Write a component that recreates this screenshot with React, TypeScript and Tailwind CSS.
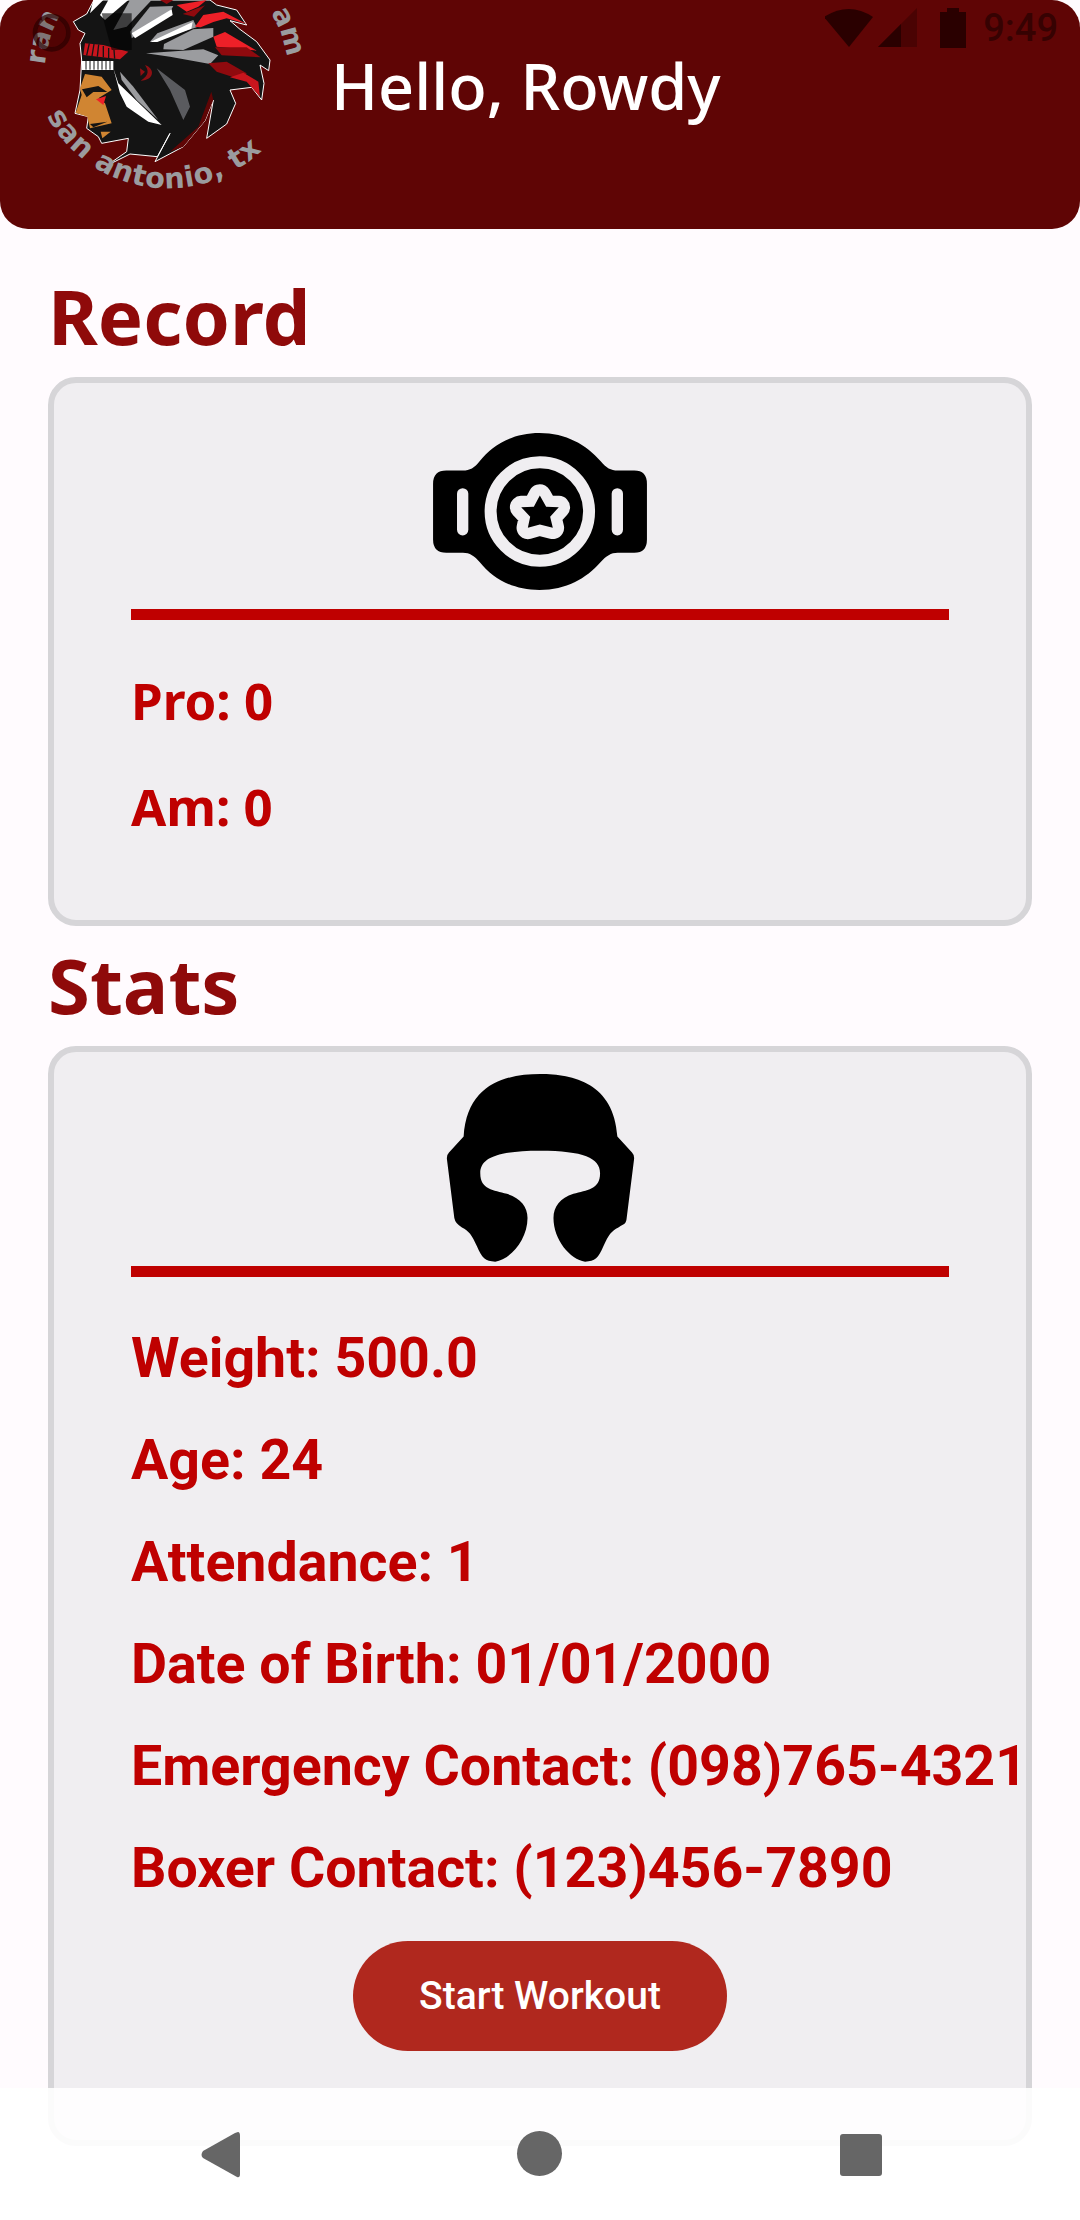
import React from "react";

function Logo() {
  return (
    <svg viewBox="0 0 930 687" className="w-[310px] h-[229px] shrink-0">
      <defs>
        <path id="logoTop" d="M135 195 A365 365 0 0 1 860 172" fill="none" />
        <path id="logoBottom" d="M140 347 A410 410 0 0 0 885 302" fill="none" />
      </defs>
      <text fontFamily="'DejaVu Sans', sans-serif" fontWeight="700" fontSize="84" fill="#9b9c9f">
        <textPath href="#logoTop" startOffset="0">ran</textPath>
      </text>
      <text fontFamily="'DejaVu Sans', sans-serif" fontWeight="700" fontSize="84" fill="#9b9c9f" textAnchor="end">
        <textPath href="#logoTop" startOffset="100%">am</textPath>
      </text>
      <g transform="translate(210 0)">
        <path
          d="M10 65 L50 42 L72 0 L420 0 L440 15 L500 30 L530 75 L480 62 L510 88 L560 125 L600 180 L596 212 L570 195 L582 250 L575 300 L545 262 L480 270 L497 310 L470 372 L410 415 L430 300 L405 362 L340 440 L255 485 L300 400 L262 470 L180 462 L110 497 L170 455 L175 415 L95 430 L85 410 L50 385 L55 350 L15 340 L30 270 L35 180 L30 130 L45 100 L25 90 Z"
          fill="#141414"
          stroke="#ffffff"
          strokeWidth="3"
          strokeLinejoin="round"
        />
        <path d="M424 275 L430 300 L405 362 L340 440 L300 455 L385 380 Z" fill="#5f0505" />
        <path d="M70 0 L100 0 L60 40 Z" fill="#ffffff" />
        <path d="M115 0 L175 0 L105 60 L90 45 Z" fill="#ffffff" />
        <path d="M180 0 L245 0 L170 80 L130 90 Z" fill="#9b9c9f" />
        <path d="M240 20 L310 18 L300 35 L185 115 L180 95 Z" fill="#9b9c9f" />
        <path d="M185 100 L305 28 L308 45 L195 115 Z" fill="#ffffff" />
        <path d="M262 100 L370 60 L380 82 L240 125 Z" fill="#9b9c9f" />
        <path d="M240 126 L368 66 L364 86 L262 126 Z" fill="#ffffff" />
        <path d="M282 132 L370 88 L430 84 L430 110 L340 150 L280 148 Z" fill="#9b9c9f" />
        <path d="M228 160 L400 148 L445 166 L420 192 L300 170 Z" fill="#9b9c9f" />
        <path d="M430 110 L465 96 L560 152 L440 140 Z" fill="#ee2028" />
        <path d="M435 142 L530 142 L572 172 L455 166 Z" fill="#8f0a0e" />
        <path d="M415 190 L470 185 L530 220 L520 232 L500 235 L440 215 Z" fill="#8f0a0e" />
        <path d="M520 218 L565 245 L570 290 L530 245 L480 232 Z" fill="#c8151d" />
        <path d="M375 80 L400 45 L460 35 L530 72 L470 55 L430 66 L392 82 Z" fill="#ee2028" />
        <path d="M320 15 L410 0 L385 20 L350 35 Z" fill="#ee2028" />
        <path d="M338 42 L405 16 L372 50 Z" fill="#8f0a0e" />
        <path d="M270 0 L310 0 L290 12 Z" fill="#8f0a0e" />
        <path d="M45 130 L100 135 L175 155 L150 178 L40 165 Z" fill="#c8151d" />
        <path d="M58 130 L50 166 M72 132 L66 168 M86 134 L82 170 M100 138 L100 172 M116 144 L116 174 M132 150 L134 176" stroke="#141414" strokeWidth="4" />
        <path d="M35 183 H130 V210 H35 Z" fill="#ffffff" />
        <path d="M48 183 V209 M60 183 V209 M72 183 V209 M84 183 V209 M96 183 V209 M108 183 V209 M120 183 V209" stroke="#141414" strokeWidth="3" />
        <path d="M45 222 L95 230 L125 270 L85 295 L105 310 L125 370 L60 385 L52 350 L17 338 L35 285 L30 265 Z" fill="#d08532" />
        <path d="M36 268 L85 258 L112 276 L70 276 L50 292 Z" fill="#141414" />
        <path d="M78 298 L108 288 L100 315 Z" fill="#ee2028" />
        <path d="M60 372 L112 365 L70 382 Z" fill="#141414" />
        <path d="M92 395 L122 395 L97 415 Z" fill="#d08532" />
        <path d="M130 205 L145 250 L275 375 L235 365 L170 320 L150 280 Z" fill="#ffffff" />
        <path d="M150 215 L190 260 L265 360 L200 300 L155 240 Z" fill="#9b9c9f" />
        <path d="M260 205 L345 270 L360 320 L340 360 L300 270 Z" fill="#5a5b5f" />
        <path d="M225 195 C255 205 255 240 212 242 C240 225 235 210 225 195 Z M210 205 L225 215 L212 228 Z" fill="#8f0f13" />
        <path d="M95 40 H185 V150 H125 Z" fill="#000000" fillOpacity="0.6" />
      </g>
      <text fontFamily="'DejaVu Sans', sans-serif" fontWeight="700" fontSize="86" fill="#9b9c9f" letterSpacing="2">
        <textPath href="#logoBottom" startOffset="0">san antonio, tx</textPath>
      </text>
      <circle cx="155" cy="98" r="50" fill="none" stroke="#2a0000" strokeOpacity="0.7" strokeWidth="14" />
      <circle cx="155" cy="98" r="44" fill="#2a0000" fillOpacity="0.25" />
    </svg>
  );
}

function BeltIcon() {
  return (
    <svg viewBox="100 70 643 472" className="w-[214px] h-[157px]">
      <path
        d="M420 70 C340 70 280 105 240 155 C225 175 210 183 190 183 L140 183 Q100 183 100 223 V390 Q100 430 140 430 H190 C210 430 225 440 240 458 C280 508 340 542 420 542 C500 542 560 508 604 458 C620 440 635 430 655 430 H705 Q743 430 743 390 V223 Q743 183 705 183 H655 C635 183 620 175 604 155 C560 105 500 70 420 70 Z"
        fill="#000000"
      />
      <circle cx="421" cy="306" r="148" fill="none" stroke="#f0eef1" strokeWidth="36" />
      <rect x="172" y="236" width="34" height="142" rx="17" fill="#f0eef1" />
      <rect x="637" y="236" width="34" height="142" rx="17" fill="#f0eef1" />
      <path
        d="M421 258 L440 292 L478 293 L452 322 L460 355 L421 345 L385 355 L392 322 L365 293 L403 292 Z"
        fill="#f0eef1"
        stroke="#f0eef1"
        strokeWidth="68"
        strokeLinejoin="round"
      />
      <path d="M421 258 L440 292 L478 293 L452 322 L460 355 L421 345 L385 355 L392 322 L365 293 L403 292 Z" fill="#000000" />
    </svg>
  );
}

function HelmetIcon() {
  return (
    <svg viewBox="138 72 566 565" className="w-[189px] h-[188px]">
      <path
        d="M420 72 C320 72 200 100 190 260 L146 308 Q138 316 140 330 L162 505 Q165 522 185 533 C205 543 215 555 230 590 C245 625 255 636 285 636 C330 630 382 570 382 505 C382 470 360 445 320 432 C280 420 240 420 240 370 C240 325 290 303 420 303 C550 303 600 325 600 370 C600 420 560 420 520 432 C480 445 460 470 460 505 C460 570 510 630 555 636 C585 636 595 625 610 590 C625 555 635 543 655 533 C675 522 678 522 680 505 L702 330 Q704 316 696 308 L652 260 C642 100 520 72 420 72 Z"
        fill="#000000"
      />
    </svg>
  );
}

function Row({ children, wide }: { children: React.ReactNode; wide?: boolean }) {
  return (
    <div
      className={
        wide
          ? "h-[106px] flex items-center whitespace-nowrap text-[#bf0000] text-[51px] font-bold font-['Noto_Sans',sans-serif]"
          : "h-[102px] flex items-center whitespace-nowrap text-[#bf0000] text-[55.5px] font-bold font-['Roboto',sans-serif]"
      }
    >
      {children}
    </div>
  );
}

export default function App() {
  return (
    <div className="relative w-[1080px] h-[2220px] overflow-hidden bg-[#fffbfe]">
      <header className="relative h-[229px] rounded-[28px] overflow-hidden bg-[#5f0505] flex items-center">
        <Logo />
        <h1 className="ml-[21px] mb-[56px] text-white text-[63px] font-medium font-['Noto_Sans',sans-serif]">
          Hello, Rowdy
        </h1>
      </header>

      <div className="absolute top-0 right-0 h-[56px] w-[300px] flex items-center justify-end pr-[22px] gap-[8px]">
        <svg width="142" height="42" viewBox="822 12 142 42" className="mr-[8px]">
          <path d="M821 22 Q846 6 870 22 L846 52 Z" fill="#2a0000" />
          <path d="M875 52 L914 13 V52 Z" fill="#4a0303" />
          <path d="M875 52 L898 29 V52 Z" fill="#2a0000" />
          <path d="M937 17 H944 V13 H956 V17 H963 V53 H937 Z" fill="#2a0000" />
        </svg>
        <span className="text-[#360202] text-[38px] font-medium font-['Roboto',sans-serif]">9:49</span>
      </div>

      <main className="px-[48px]">
        <h2 className="h-[148px] pt-[42px] text-[#8f0a0a] text-[76px] leading-[90px] font-bold font-['Noto_Sans',sans-serif]">
          Record
        </h2>
        <section className="h-[549px] rounded-[28px] border-[6px] border-[#d6d5d8] bg-[#f0eef1] px-[77px]">
          <div className="flex justify-center pt-[50px]">
            <BeltIcon />
          </div>
          <div className="h-[11px] mt-[19px] mb-[27px] bg-[#bf0000]" />
          <Row wide>Pro: 0</Row>
          <Row wide>Am: 0</Row>
        </section>

        <h2 className="h-[120px] pt-[14px] text-[#8f0a0a] text-[76px] leading-[90px] font-bold font-['Noto_Sans',sans-serif]">
          Stats
        </h2>
        <section className="h-[1100px] rounded-[28px] border-[6px] border-[#d6d5d8] bg-[#f0eef1] px-[77px]">
          <div className="flex justify-center pt-[22px]">
            <HelmetIcon />
          </div>
          <div className="h-[11px] mt-[4px] mb-[31px] bg-[#bf0000]" />
          <Row>Weight: 500.0</Row>
          <Row>Age: 24</Row>
          <Row>Attendance: 1</Row>
          <Row>Date of Birth: 01/01/2000</Row>
          <Row>Emergency Contact: (098)765-4321</Row>
          <Row>Boxer Contact: (123)456-7890</Row>
          <div className="flex justify-center mt-[21px]">
            <button className="w-[374px] h-[110px] rounded-full bg-[#b0281e] text-white text-[39px] font-medium font-['Roboto',sans-serif]">
              Start Workout
            </button>
          </div>
        </section>
      </main>

      <nav className="absolute left-0 right-0 bottom-0 h-[132px] bg-white/90">
        <svg width="1080" height="132" viewBox="0 2088 1080 132">
          <path d="M238 2132 Q240 2132 240 2136 V2174 Q240 2178 237 2177 L203 2158 Q200 2155 203 2151 L235 2133 Z" fill="#666666" />
          <circle cx="539.5" cy="2153.5" r="22.5" fill="#666666" />
          <rect x="840" y="2134" width="42" height="42" rx="3" fill="#666666" />
        </svg>
      </nav>
    </div>
  );
}
